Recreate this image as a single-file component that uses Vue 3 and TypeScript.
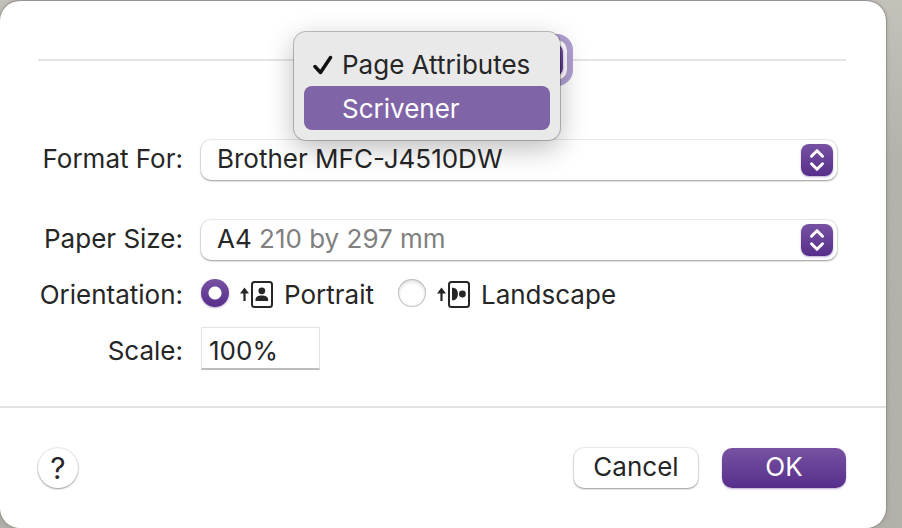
<script setup lang="ts">
import { computed, ref } from 'vue'

interface Choice {
  id: string
  name: string
  detail?: string
}

const panes: Choice[] = [
  { id: 'attributes', name: 'Page Attributes' },
  { id: 'scrivener', name: 'Scrivener' },
]
const printers: Choice[] = [{ id: 'brother', name: 'Brother MFC-J4510DW' }]
const papers: Choice[] = [{ id: 'a4', name: 'A4', detail: '210 by 297 mm' }]

const pane = ref('attributes')
const highlighted = ref('scrivener')
const menuOpen = ref(true)
const printer = ref('brother')
const paper = ref('a4')
const orientation = ref<'portrait' | 'landscape'>('portrait')
const scale = ref('100%')

const printerChoice = computed(() => printers.find((p) => p.id === printer.value))
const paperChoice = computed(() => papers.find((p) => p.id === paper.value))

function choosePane(id: string): void {
  pane.value = id
  menuOpen.value = false
}
</script>

<template>
  <div class="backdrop">
    <form class="sheet" @submit.prevent>
      <header class="pane-bar">
        <span class="rule"></span>
        <div class="pane-picker">
          <select v-model="pane" class="popup focused" aria-label="Settings pane">
            <option v-for="p in panes" :key="p.id" :value="p.id">{{ p.name }}</option>
          </select>
          <span class="stepper">
            <svg viewBox="0 0 32 32" aria-hidden="true">
              <path d="M10.5 12.2 16 6.7l5.5 5.5M10.5 19.8 16 25.3l5.5-5.5" />
            </svg>
          </span>
          <div v-if="menuOpen" class="menu" role="menu">
            <button
              v-for="p in panes"
              :key="p.id"
              type="button"
              role="menuitemradio"
              class="menu-item"
              :class="{ active: p.id === highlighted }"
              :aria-checked="p.id === pane"
              @mouseenter="highlighted = p.id"
              @click="choosePane(p.id)"
            >
              <svg class="check" viewBox="0 0 20 20" aria-hidden="true">
                <path v-if="p.id === pane" d="M2 11.5 7.5 17.5 17.5 2.5" />
              </svg>
              <span>{{ p.name }}</span>
            </button>
          </div>
        </div>
        <span class="rule"></span>
      </header>

      <div class="fields">
        <label class="label" for="printer">Format For:</label>
        <div class="picker">
          <select id="printer" v-model="printer" class="popup">
            <option v-for="p in printers" :key="p.id" :value="p.id">{{ p.name }}</option>
          </select>
          <span class="face" aria-hidden="true">{{ printerChoice?.name }}</span>
          <span class="stepper">
            <svg viewBox="0 0 32 32" aria-hidden="true">
              <path d="M10.5 12.2 16 6.7l5.5 5.5M10.5 19.8 16 25.3l5.5-5.5" />
            </svg>
          </span>
        </div>

        <label class="label" for="paper">Paper Size:</label>
        <div class="picker">
          <select id="paper" v-model="paper" class="popup">
            <option v-for="p in papers" :key="p.id" :value="p.id">{{ p.name }} {{ p.detail }}</option>
          </select>
          <span class="face" aria-hidden="true">
            {{ paperChoice?.name }} <span class="detail">{{ paperChoice?.detail }}</span>
          </span>
          <span class="stepper">
            <svg viewBox="0 0 32 32" aria-hidden="true">
              <path d="M10.5 12.2 16 6.7l5.5 5.5M10.5 19.8 16 25.3l5.5-5.5" />
            </svg>
          </span>
        </div>
      </div>

      <div class="fields compact">
        <span id="orientation-label" class="label">Orientation:</span>
        <div class="radios" role="radiogroup" aria-labelledby="orientation-label">
          <label class="radio">
            <input v-model="orientation" type="radio" name="orientation" value="portrait" />
            <svg class="page-icon" viewBox="0 0 33 28" aria-hidden="true">
              <path class="solid" d="M4.5 6.5 9 12.5H5.6V20H3.4v-7.5H0z" />
              <rect x="12" y="1" width="20" height="25" rx="2.5" />
              <circle class="solid" cx="21.8" cy="9.8" r="3.4" />
              <path class="solid" d="M15.5 20v-1.400c0-2.600 2.800-4 6.300-4s6.300 1.400 6.300 4V20z" />
            </svg>
            <span>Portrait</span>
          </label>
          <label class="radio">
            <input v-model="orientation" type="radio" name="orientation" value="landscape" />
            <svg class="page-icon" viewBox="0 0 33 28" aria-hidden="true">
              <path class="solid" d="M4.5 6.5 9 12.5H5.6V20H3.4v-7.5H0z" />
              <rect x="12" y="1" width="20" height="25" rx="2.5" />
              <circle class="solid" cx="25.4" cy="13" r="3.4" />
              <path class="solid" d="M15 6.7h1.200c2.600 0 4.700 2.800 4.700 6.300s-2.100 6.300-4.700 6.300H15z" />
            </svg>
            <span>Landscape</span>
          </label>
        </div>

        <label class="label" for="scale">Scale:</label>
        <input id="scale" v-model="scale" class="scale" type="text" />
      </div>

      <footer class="actions">
        <button class="button help" type="button" aria-label="Help">?</button>
        <button class="button" type="button">Cancel</button>
        <button class="button primary" type="submit">OK</button>
      </footer>
    </form>
  </div>
</template>

<style>
body {
  margin: 0;
}
</style>

<style scoped>
.backdrop {
  box-sizing: border-box;
  display: flex;
  min-height: 100vh;
  padding: 1px 16px 0 0;
  background: linear-gradient(#c4c1b9, #b5b2ac 30%, #b3b0aa);
  color: #262626;
  font-family: Inter, "Liberation Sans", sans-serif;
  font-size: 26px;
  line-height: 30px;
}

.sheet {
  display: flex;
  flex: 1;
  flex-direction: column;
  border-radius: 20px;
  background: #fff;
  box-shadow: 0 0 0 1px #989590, 0 0 5px rgba(0, 0, 0, 0.2);
}

button,
select,
input {
  box-sizing: border-box;
  margin: 0;
  border: 0;
  color: inherit;
  font: inherit;
}

.pane-bar {
  display: flex;
  align-items: center;
  padding: 39px 40px 0 38px;
}

.rule {
  flex: 1;
  height: 2px;
  background: #e5e5e5;
}

.pane-picker,
.picker {
  display: grid;
  align-items: center;
}

.pane-picker {
  position: relative;
  z-index: 1;
  width: 250px;
}

.pane-picker > *,
.picker > * {
  grid-area: 1 / 1;
}

.popup {
  width: 100%;
  height: 40px;
  padding: 0 44px 0 16px;
  border-radius: 10px;
  appearance: none;
  background: #fff;
  box-shadow: 0 0 1px 1px rgba(0, 0, 0, 0.08), 0 1px 2px rgba(0, 0, 0, 0.35);
  color: transparent;
}

.popup option {
  color: #262626;
}

.focused {
  outline: 6px solid #b1a0d2;
}

.face {
  padding: 0 44px 2px 16px;
  pointer-events: none;
}

.detail {
  color: #808080;
}

.stepper {
  justify-self: end;
  width: 32px;
  height: 32px;
  margin-right: 4px;
  border-radius: 8px;
  background: linear-gradient(#7752a2, #572e8b);
  box-shadow: 0 1px 2px rgba(87, 46, 139, 0.4);
  pointer-events: none;
}

.stepper svg {
  display: block;
  fill: none;
  stroke: #fff;
  stroke-width: 3;
  stroke-linecap: round;
  stroke-linejoin: round;
}

.menu {
  position: absolute;
  top: -8px;
  left: -23px;
  box-sizing: border-box;
  width: 266px;
  padding: 10px;
  border-radius: 12px;
  background: #e9e9e9;
  box-shadow: 0 0 0 1px rgba(0, 0, 0, 0.24), 0 8px 28px rgba(0, 0, 0, 0.27);
}

.menu-item {
  display: flex;
  align-items: center;
  gap: 9px;
  width: 100%;
  height: 44px;
  padding: 2px 9px 0;
  border-radius: 8px;
  background: transparent;
  text-align: left;
  white-space: nowrap;
}

.menu-item.active {
  background: #8064a8;
  color: #fff;
}

.check {
  flex: none;
  width: 20px;
  height: 20px;
  fill: none;
  stroke: #111;
  stroke-width: 3.5;
  stroke-linecap: round;
  stroke-linejoin: round;
}

.fields {
  display: grid;
  grid-template-columns: 183px 1fr;
  gap: 40px 18px;
  align-items: center;
  padding: 60px 49px 0 0;
}

.label {
  padding-bottom: 2px;
  text-align: right;
  white-space: nowrap;
}

.compact {
  row-gap: 16px;
  padding-top: 15px;
}

.compact .label {
  padding: 4px 0 0;
}

.radios {
  display: flex;
  flex-wrap: wrap;
  gap: 24px;
}

.radio {
  display: flex;
  align-items: center;
  gap: 11px;
  height: 36px;
}

.radio span {
  padding-top: 4px;
}

.radio input {
  width: 28px;
  height: 28px;
  border-radius: 50%;
  appearance: none;
  background: #fff;
  box-shadow: inset 0 0 0 1px #c2c2c2, inset 0 2px 4px rgba(0, 0, 0, 0.18);
}

.radio input:checked {
  background: radial-gradient(circle, #fff 6px, transparent 7px), linear-gradient(#7752a2, #572e8b);
  box-shadow: 0 1px 2px rgba(87, 46, 139, 0.4);
}

.page-icon {
  flex: none;
  width: 33px;
  height: 28px;
  margin-top: 4px;
  fill: none;
  stroke: #262626;
  stroke-width: 2;
}

.page-icon .solid {
  fill: #262626;
  stroke: none;
}

.scale {
  width: 119px;
  height: 43px;
  padding: 5px 7px 0;
  border: 1px solid #e3e3e3;
  border-bottom: 2px solid #bdbdbd;
  background: #fff;
}

.actions {
  display: flex;
  align-items: center;
  gap: 24px;
  margin-top: 36px;
  padding: 40px 40px 40px 38px;
  border-top: 2px solid #e3e3e3;
}

.button {
  width: 124px;
  height: 40px;
  padding: 0 0 2px;
  border-radius: 10px;
  background: #fff;
  box-shadow: 0 0 1px 1px rgba(0, 0, 0, 0.08), 0 1px 2px rgba(0, 0, 0, 0.35);
}

.help {
  width: 40px;
  margin-right: auto;
  padding: 0;
  border-radius: 50%;
  font-size: 30px;
}

.primary {
  background: linear-gradient(#7752a2, #572e8b);
  box-shadow: 0 1px 2px rgba(87, 46, 139, 0.4);
  color: #fff;
}
</style>
